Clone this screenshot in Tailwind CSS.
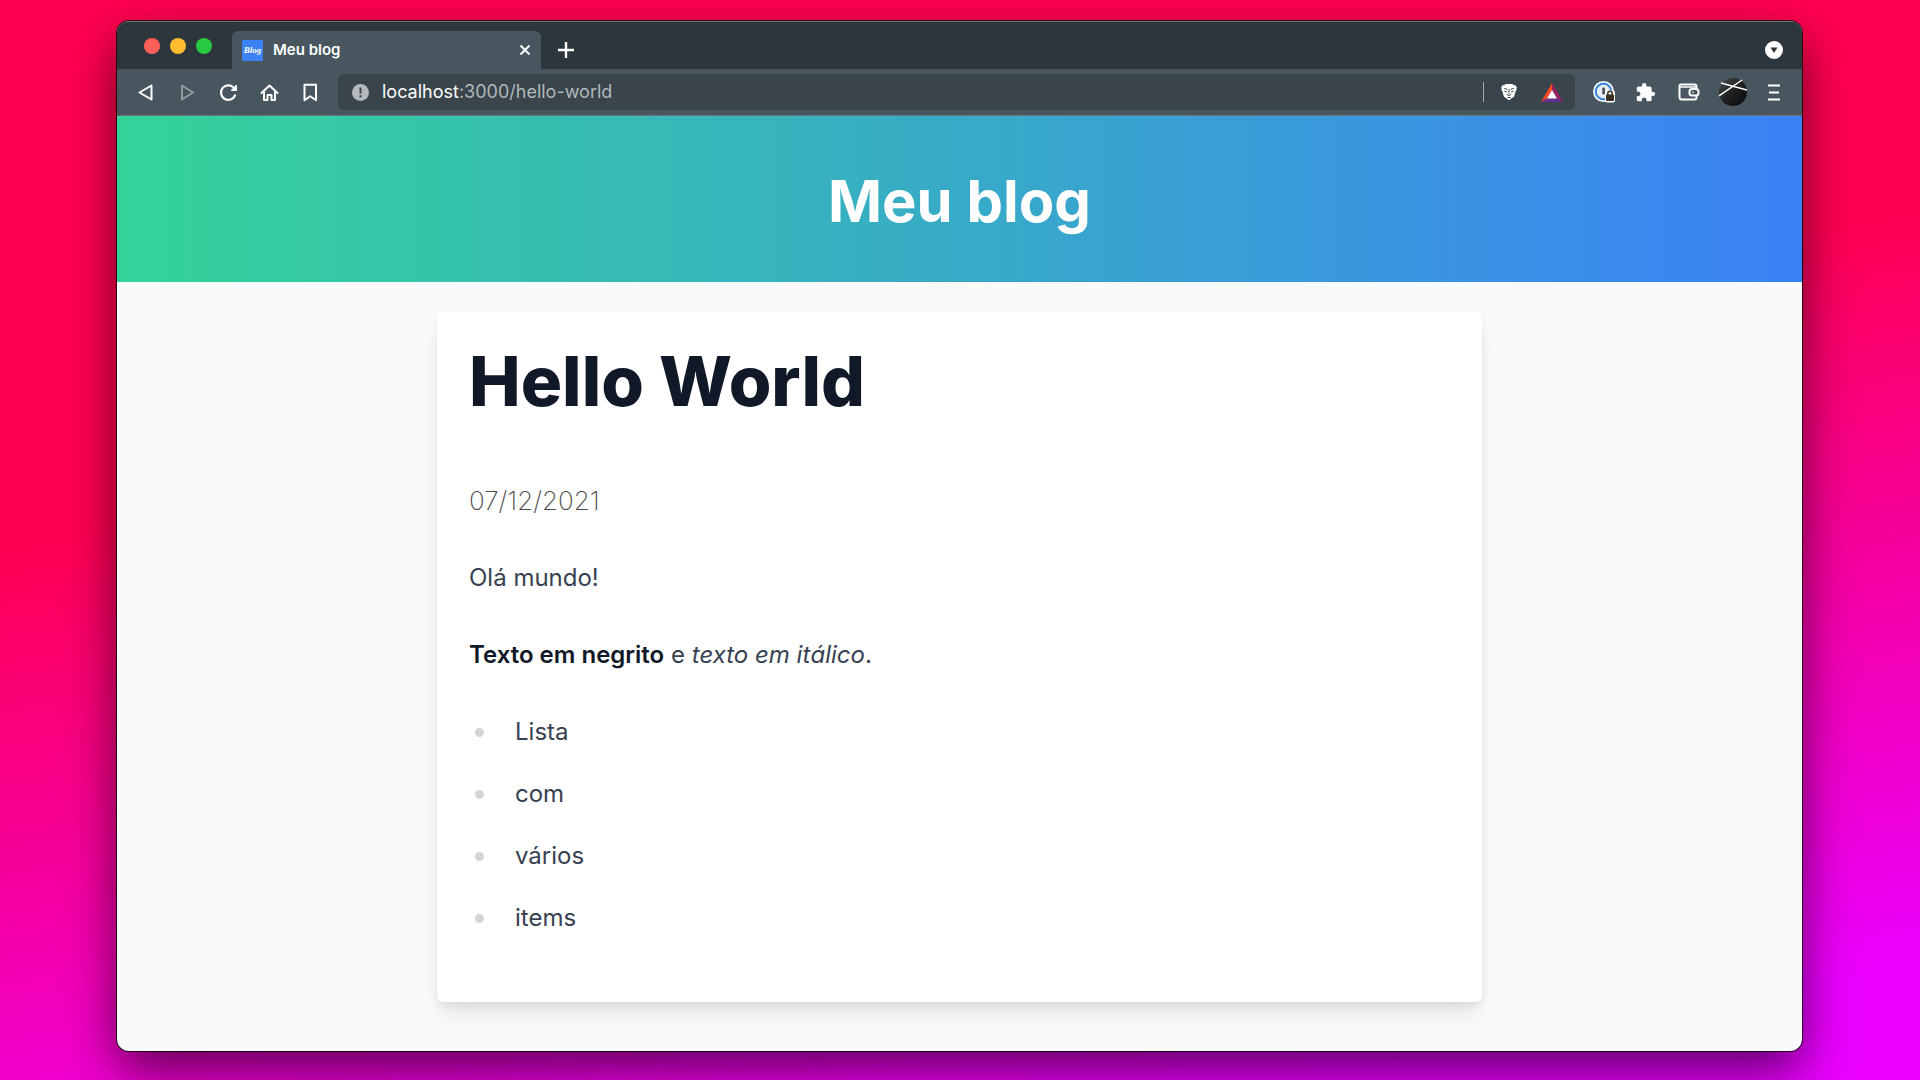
<!DOCTYPE html>
<html lang="pt-BR">

<head>
  <meta charset="UTF-8" />
  <meta name="viewport" content="width=device-width, initial-scale=1.0" />
  <title>Meu blog</title>
  <script src="https://cdn.jsdelivr.net/npm/@tailwindcss/browser@4"></script>
</head>

<body class="min-h-screen flex bg-[linear-gradient(170deg,#ff0050_0%,#ff0050_38%,#eb00ff_92%)] pl-[117px] pr-[118px] pt-[21px] pb-[29px] font-['Inter','Liberation_Sans',sans-serif]">

  <div class="flex flex-col flex-1 min-w-0 rounded-xl overflow-hidden bg-[#f8fafc] shadow-[0_0_0_1px_rgba(0,0,0,0.75),0_20px_50px_rgba(0,0,0,0.6)]">

    <!-- Abas -->
    <div class="flex items-end h-12 bg-[#2e363d] border-t border-[#6b7378]">
      <div class="flex gap-[10px] self-center ml-[27px] mr-5">
        <button aria-label="Fechar" class="size-4 rounded-full bg-[#ff5f57]"></button>
        <button aria-label="Minimizar" class="size-4 rounded-full bg-[#febc2e]"></button>
        <button aria-label="Maximizar" class="size-4 rounded-full bg-[#28c840]"></button>
      </div>
      <div class="flex items-center w-[309px] h-[38px] px-[10px] rounded-t-md bg-[#47565f] text-white">
        <svg class="size-[21px] mr-[10px]" viewBox="0 0 21 21">
          <rect width="21" height="21" rx="1" fill="#3b82f6" />
          <text x="10.5" y="13" text-anchor="middle" font-size="9" font-weight="700" font-style="italic" font-family="Liberation Serif, serif" fill="#fff">Blog</text>
        </svg>
        <span class="flex-1 text-[15px] font-semibold">Meu blog</span>
        <button aria-label="Fechar aba">
          <svg class="size-3" viewBox="0 0 12 12" fill="none" stroke="currentColor" stroke-width="2">
            <path d="M1.500 1.500l9 9M10.500 1.500l-9 9" />
          </svg>
        </button>
      </div>
      <button aria-label="Nova aba" class="h-[38px] ml-[17px] text-white">
        <svg class="size-4" viewBox="0 0 16 16" fill="none" stroke="currentColor" stroke-width="2.4">
          <path d="M8 0v16M0 8h16" />
        </svg>
      </button>
      <button aria-label="Pesquisar abas" class="h-[38px] ml-auto mr-[19px]">
        <svg class="size-[18px]" viewBox="0 0 18 18">
          <circle cx="9" cy="9" r="9" fill="#fff" />
          <path d="M5.500 6.500h7L9 12z" fill="#2e363d" />
        </svg>
      </button>
    </div>

    <!-- Barra de endereço -->
    <div class="flex items-center h-[47px] pl-5 pr-[22px] bg-[#47565f] border-b border-[#6b7378] text-white">
      <div class="flex items-center gap-5 mr-4">
        <button aria-label="Voltar">
          <svg class="size-[21px]" viewBox="0 0 21 21" fill="none" stroke="currentColor" stroke-width="2" stroke-linejoin="round">
            <path d="M14.500 3.500v14L2.500 10.500z" />
          </svg>
        </button>
        <button aria-label="Avançar" class="text-[#929b9f]">
          <svg class="size-[21px]" viewBox="0 0 21 21" fill="none" stroke="currentColor" stroke-width="2" stroke-linejoin="round">
            <path d="M4 3.500v14l11-7z" />
          </svg>
        </button>
        <button aria-label="Recarregar">
          <svg class="size-[21px]" viewBox="0 0 21 21" fill="none" stroke="currentColor" stroke-width="2.2" stroke-linecap="round">
            <path d="M16 13.500a7.300 7.300 0 1 1-2-8.500" />
            <path d="M17.300 3.500v4.800h-4.800z" fill="currentColor" stroke-width="1.2" stroke-linejoin="round" />
          </svg>
        </button>
        <button aria-label="Início">
          <svg class="size-[21px]" viewBox="0 0 21 21" fill="none" stroke="currentColor" stroke-width="2" stroke-linejoin="round" stroke-linecap="round">
            <path d="M1.500 11l8-7.500 8 7.500M4 9.500v8.500h3.500v-5h4v5H15V9.500" />
          </svg>
        </button>
        <button aria-label="Favoritar">
          <svg class="size-[21px]" viewBox="0 0 21 21" fill="none" stroke="currentColor" stroke-width="2" stroke-linejoin="round">
            <path d="M3.500 2.800h11.500v15.500l-5.750-4-5.750 4z" />
          </svg>
        </button>
      </div>

      <div class="flex items-center flex-1 min-w-0 h-9 pl-[14px] pr-3 rounded-md bg-[#39444b]">
        <svg class="size-[17px] mr-[13px]" viewBox="0 0 17 17">
          <circle cx="8.5" cy="8.5" r="8.5" fill="#b4b9bc" />
          <path d="M8.500 3.500v6M8.500 11.300v2.200" stroke="#39444b" stroke-width="2" />
        </svg>
        <a href="#" class="flex-1 text-[18px] leading-6 text-[#b2b8bb]"><span class="text-white">localhost</span>:3000/hello-world</a>
        <span class="w-px h-5 bg-[#a3aaae] mr-4"></span>
        <button aria-label="Brave Shields" class="mr-[23px]">
          <svg class="size-[18px]" viewBox="0 0 18 18">
            <path d="M5.500 1h7l1.300 1.300 1.700-.1 1.300 2-.5 1.300.4 1.500-1.200 1.500-1.300 5L9 17.300 3.800 13.500 2.500 8.500 1.300 7l.4-1.500-.5-1.300 1.300-2 1.700.1z" fill="#fff" />
            <path d="M4.200 5.500l3 .8M13.800 5.500l-3 .8M4.500 8.300l2.300.6M13.500 8.300l-2.300.6M9 6v4.500M6.700 11.300L9 12.500l2.300-1.200M7.500 14.500h3" stroke="#39444b" stroke-width="1" fill="none" />
          </svg>
        </button>
        <button aria-label="Brave Rewards">
          <svg class="w-[22px] h-[19px]" viewBox="0 0 22 19">
            <path d="M11 0L0 19l6-3.500 5-8.500z" fill="#ff4724" />
            <path d="M11 0l11 19-6-3.500L11 7z" fill="#9e1f63" />
            <path d="M0 19h22l-6-3.500H6z" fill="#662d91" />
            <path d="M11 7l5 8.500H6z" fill="#fff" />
          </svg>
        </button>
      </div>

      <div class="flex items-center ml-[18px]">
        <button aria-label="1Password" class="mr-5">
          <svg class="size-[22px]" viewBox="0 0 22 22">
            <circle cx="10.5" cy="10.5" r="10.5" fill="#fff" />
            <circle cx="10.5" cy="10.5" r="7.8" fill="#e9eef2" stroke="#3f8ade" stroke-width="2.2" />
            <rect x="9.3" y="6.5" width="2.600" height="7" rx="1" fill="#4a4f55" />
            <rect x="12" y="9.5" width="10" height="12" rx="2" fill="#fff" />
            <path d="M14.800 14v-1.500a2.200 2.200 0 0 1 4.400 0V14" fill="none" stroke="#3b2d22" stroke-width="1.5" />
            <rect x="13" y="13.5" width="8" height="6.5" rx="1" fill="#3b2d22" />
          </svg>
        </button>
        <button aria-label="Extensões" class="mr-[22px]">
          <svg class="size-[21px]" viewBox="0 0 24 24" fill="currentColor">
            <path d="M20.500 11H19V7c0-1.100-.9-2-2-2h-4V3.500a2.500 2.500 0 0 0-5 0V5H4c-1.100 0-1.990.9-1.990 2v3.800H3.500c1.490 0 2.700 1.210 2.700 2.700s-1.210 2.700-2.700 2.700H2V20c0 1.100.9 2 2 2h3.800v-1.500c0-1.490 1.210-2.700 2.700-2.700s2.700 1.210 2.700 2.700V22H17c1.100 0 2-.9 2-2v-4h1.500a2.500 2.500 0 0 0 0-5z" />
          </svg>
        </button>
        <button aria-label="Carteira" class="mr-[19px]">
          <svg class="w-[22px] h-[18px]" viewBox="0 0 22 18" fill="none" stroke="currentColor" stroke-width="2">
            <path d="M18.500 5V3.500a2 2 0 0 0-2-2H3A1.500 1.500 0 0 0 1.500 3v11a2.500 2.500 0 0 0 2.500 2.500h12.500a2 2 0 0 0 2-2V13" />
            <path d="M2 4h16" stroke-width="1.5" />
            <rect x="11.5" y="6" width="9" height="6.5" rx="2.5" />
            <circle cx="15" cy="9.2" r=".8" fill="currentColor" stroke-width="0" />
          </svg>
        </button>
        <button aria-label="Perfil" class="mr-[21px]">
          <svg class="size-7" viewBox="0 0 28 28">
            <defs>
              <linearGradient id="avatar" x1="0" y1="0" x2="1" y2="1">
                <stop offset="0" stop-color="#4a4f52" />
                <stop offset=".5" stop-color="#1d1f21" />
                <stop offset="1" stop-color="#08090a" />
              </linearGradient>
            </defs>
            <circle cx="14" cy="14" r="14" fill="url(#avatar)" />
            <path d="M0 18L23 2M2 5l26 7" stroke="#fff" stroke-width="1.5" />
          </svg>
        </button>
        <button aria-label="Menu">
          <svg class="w-3 h-[17px]" viewBox="0 0 12 17" fill="none" stroke="currentColor" stroke-width="2">
            <path d="M0 1.500h12M1 8.500h10M0 15.500h12" />
          </svg>
        </button>
      </div>
    </div>

    <header class="pt-12 pb-11 bg-[linear-gradient(90deg,#34d399,#3b82f6)] text-center">
      <h1 class="text-[58px] leading-[74px] font-bold text-white">Meu blog</h1>
    </header>

    <main class="flex-1 px-8 pt-[30px] pb-12">
      <article class="max-w-[1045px] mx-auto px-8 pt-[30px] pb-[61px] rounded-md bg-white text-[#374151] text-[24px] leading-[46px] shadow-[0_14px_22px_-4px_rgba(0,0,0,0.1),0_4px_10px_-2px_rgba(0,0,0,0.08)]">
        <h2 class="text-[69px] leading-[78px] font-extrabold text-[#111827] mb-[58px]">Hello World</h2>
        <p class="text-[26px] font-extralight text-[#4b4b4b] mb-[31px]">07/12/2021</p>
        <p class="mb-[31px]">Olá mundo!</p>
        <p class="mb-[31px]"><strong class="font-semibold text-[#111827]">Texto em negrito</strong> e <em>texto em itálico</em>.</p>
        <ul class="flex flex-col gap-4">
          <li class="flex items-center gap-[31px] pl-[6px] before:size-[9px] before:rounded-full before:bg-[#d4d4d4]">Lista</li>
          <li class="flex items-center gap-[31px] pl-[6px] before:size-[9px] before:rounded-full before:bg-[#d4d4d4]">com</li>
          <li class="flex items-center gap-[31px] pl-[6px] before:size-[9px] before:rounded-full before:bg-[#d4d4d4]">vários</li>
          <li class="flex items-center gap-[31px] pl-[6px] before:size-[9px] before:rounded-full before:bg-[#d4d4d4]">items</li>
        </ul>
      </article>
    </main>
  </div>

</body>

</html>
